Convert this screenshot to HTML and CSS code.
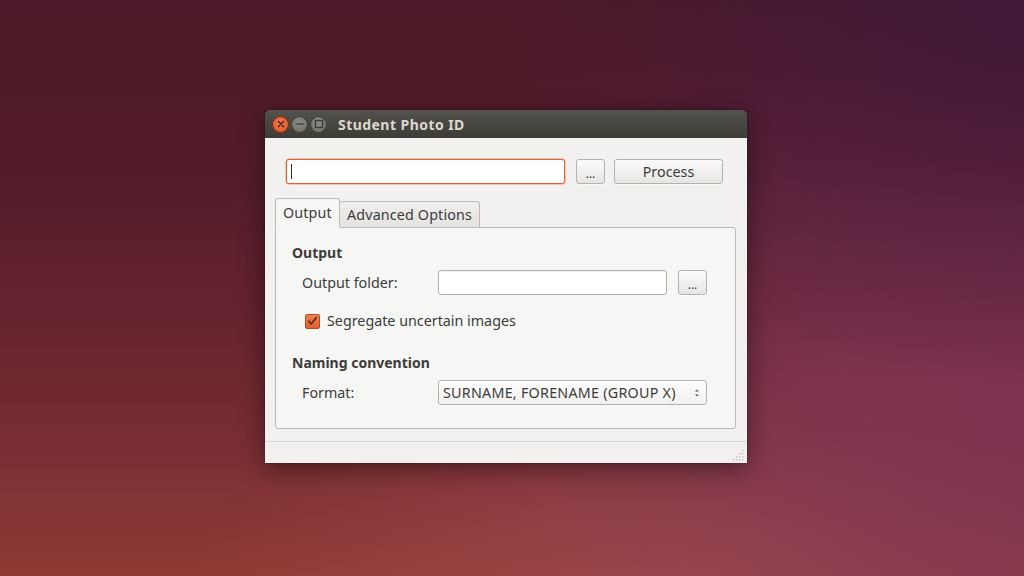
FILE: index.html
```html
<!DOCTYPE html>
<html>
<head>
<meta charset="utf-8">
<link rel="stylesheet" href="styles.css">
</head>
<body>
<div class="desktop">
  <div class="window">
    <div class="titlebar">
      <div class="wbtns">
        <span class="wbtn close"><svg width="16" height="16" viewBox="0 0 16 16"><path d="M5.5 5.5l5 5M10.5 5.5l-5 5" stroke="#3a1a10" stroke-width="1.4" stroke-linecap="round"/></svg></span>
        <span class="wbtn"><svg width="16" height="16" viewBox="0 0 16 16"><path d="M4.5 8h7" stroke="#3c3b37" stroke-width="1.4"/></svg></span>
        <span class="wbtn"><svg width="16" height="16" viewBox="0 0 16 16"><rect x="4.5" y="4.5" width="7" height="7" fill="none" stroke="#3c3b37" stroke-width="1.3"/></svg></span>
      </div>
      <div class="title">Student Photo ID</div>
    </div>
    <div class="content">
      <div class="toprow">
        <div class="entry focus"><span class="caret"></span></div>
        <button class="btn dots">...</button>
        <button class="btn process">Process</button>
      </div>
      <div class="notebook">
        <div class="tabs">
          <div class="tab active">Output</div>
          <div class="tab">Advanced Options</div>
        </div>
        <div class="pane">
          <div class="heading">Output</div>
          <div class="row">
            <span class="label">Output folder:</span>
            <div class="entry wide"></div>
            <button class="btn dots">...</button>
          </div>
          <div class="checkrow">
            <span class="check"><svg width="14" height="14" viewBox="0 0 14 14"><path d="M3 7.2l2.6 3L11 3.2" fill="none" stroke="#5a2210" stroke-width="1.7" stroke-linecap="round" stroke-linejoin="round"/></svg></span>
            <span class="label">Segregate uncertain images</span>
          </div>
          <div class="heading second">Naming convention</div>
          <div class="row">
            <span class="label">Format:</span>
            <div class="combo">
              <span class="combo-text">SURNAME, FORENAME (GROUP X)</span>
              <svg width="8" height="14" viewBox="0 0 8 14"><path d="M2 5.5L4 3.5L6 5.5Z M2 8.5L4 10.5L6 8.5Z" fill="#5a5a5a"/></svg>
            </div>
          </div>
        </div>
      </div>
    </div>
    <div class="statusbar">
      <svg class="grip" width="12" height="12" viewBox="0 0 12 12" fill="#c8c6c2">
        <rect x="9" y="1" width="1.5" height="1.5"/>
        <rect x="6" y="4" width="1.5" height="1.5"/><rect x="9" y="4" width="1.5" height="1.5"/>
        <rect x="3" y="7" width="1.5" height="1.5"/><rect x="6" y="7" width="1.5" height="1.5"/><rect x="9" y="7" width="1.5" height="1.5"/>
        <rect x="0" y="10" width="1.5" height="1.5"/><rect x="3" y="10" width="1.5" height="1.5"/><rect x="6" y="10" width="1.5" height="1.5"/><rect x="9" y="10" width="1.5" height="1.5"/>
      </svg>
    </div>
  </div>
</div>
</body>
</html>
```

FILE: styles.css
```css
* { box-sizing: border-box; }
html, body {
  margin: 0;
  padding: 0;
  width: 1024px;
  height: 576px;
  overflow: hidden;
}
body {
  font-family: "Noto Sans", "DejaVu Sans", sans-serif;
  font-size: 14.3px;
  color: #3c3c3c;
}
.desktop {
  width: 1024px;
  height: 576px;
  padding: 110px 0 0 265px;
  background:
    radial-gradient(ellipse 520px 380px at 1024px 0px, rgba(64,24,56,0.95), rgba(64,24,56,0) 100%),
    radial-gradient(ellipse 480px 420px at 1024px 430px, rgba(128,52,88,0.75), rgba(128,52,88,0) 100%),
    radial-gradient(ellipse 520px 260px at 720px 576px, rgba(165,80,88,0.6), rgba(165,80,88,0) 100%),
    radial-gradient(ellipse 460px 360px at 860px 330px, rgba(120,50,80,0.5), rgba(120,50,80,0) 100%),
    linear-gradient(180deg, #4c1a28 0%, #541c2a 30%, #65232e 55%, #7a2e33 78%, #8f3b35 100%);
}
.window {
  width: 482px;
  display: flex;
  flex-direction: column;
  box-shadow: 0 6px 26px rgba(0,0,0,0.45), 0 0 2px rgba(0,0,0,0.4);
  border-radius: 5px 5px 0 0;
}
.titlebar {
  height: 28px;
  background: linear-gradient(180deg, #55534d 0%, #4a4843 40%, #3d3c37 100%);
  border-radius: 5px 5px 0 0;
  display: flex;
  align-items: center;
  padding-left: 7px;
}
.wbtns { display: flex; gap: 2px; }
.wbtn {
  width: 17px;
  height: 17px;
  border-radius: 50%;
  background: radial-gradient(circle at 50% 40%, #8a8983, #6c6b66);
  box-shadow: inset 0 0 0 1px #3a3935;
  display: flex;
  align-items: center;
  justify-content: center;
}
.wbtn.close {
  background: radial-gradient(circle at 50% 40%, #f27a4e, #dc4e1f);
  box-shadow: inset 0 0 0 1px #6a2a14;
}
.title {
  margin-left: 11px;
  font-family: "Noto Sans", "DejaVu Sans", sans-serif;
  font-weight: bold;
  font-size: 14px;
  color: #dcd8cf;
  letter-spacing: 0.45px;
}
.content {
  background: #f2f1f0;
  padding: 21px 11px 12px 10px;
  display: flex;
  flex-direction: column;
}
.toprow {
  display: flex;
  align-items: center;
  padding-left: 11px;
  height: 25px;
}
.entry {
  height: 25px;
  background: #ffffff;
  border: 1px solid #b4b2ac;
  border-radius: 3px;
  box-shadow: inset 0 1px 1px rgba(0,0,0,0.05);
  display: flex;
  align-items: center;
}
.entry.focus {
  width: 279px;
  border-color: #e0622c;
  box-shadow: 0 0 0 0.5px #f0a07c;
}
.caret {
  display: block;
  width: 1px;
  height: 15px;
  background: #2a2a2a;
  margin-left: 4px;
}
.btn {
  height: 25px;
  border: 1px solid #b4b2ac;
  border-radius: 3px;
  background: linear-gradient(180deg, #fbfbfa 0%, #efeeec 60%, #e6e5e2 100%);
  font-family: "Noto Sans", "DejaVu Sans", sans-serif;
  font-size: 14.3px;
  color: #3c3c3c;
  padding: 0;
  box-shadow: 0 1px 0 rgba(255,255,255,0.6);
}
.btn.dots {
  width: 29px;
  font-size: 12px;
  padding-top: 3px;
  margin-left: 11px;
}
.btn.process {
  width: 109px;
  margin-left: 9px;
}
.notebook {
  margin-top: 14px;
  display: flex;
  flex-direction: column;
}
.tabs {
  display: flex;
  align-items: flex-end;
  height: 30px;
  position: relative;
  z-index: 1;
  margin-bottom: -1px;
}
.tab {
  height: 27px;
  padding: 0 7px;
  display: flex;
  align-items: center;
  border: 1px solid #bdbbb5;
  border-radius: 3px 3px 0 0;
  background: linear-gradient(180deg, #efeeec, #e4e3e0);
  color: #3c3c3c;
  border-left: none;
  letter-spacing: 0.15px;
}
.tab.active {
  height: 30px;
  background: #f6f6f5;
  border-left: 1px solid #bdbbb5;
  border-bottom-color: #f6f6f5;
  padding: 0 7px 2px 7px;
  width: 65px;
}
.pane {
  background: #f6f6f5;
  border: 1px solid #bdbbb5;
  border-radius: 0 3px 3px 3px;
  height: 202px;
  padding: 15px 28px 0 16px;
  display: flex;
  flex-direction: column;
}
.heading {
  font-weight: bold;
  font-size: 14px;
  height: 20px;
  line-height: 20px;
}
.heading.second { margin-top: 22px; }
.row {
  display: flex;
  align-items: center;
  height: 25px;
  padding-left: 10px;
  margin-top: 7px;
}
.label { line-height: 20px; }
.row .label { width: 136px; }
.entry.wide { width: 229px; }
.combo {
  width: 269px;
  height: 25px;
  border: 1px solid #b4b2ac;
  border-radius: 3px;
  background: linear-gradient(180deg, #fdfdfc 0%, #f2f1f0 100%);
  display: flex;
  align-items: center;
  justify-content: space-between;
  padding: 0 5px 0 4px;
}
.combo-text { letter-spacing: 0.25px; }
.checkrow {
  display: flex;
  align-items: center;
  height: 20px;
  margin-top: 16px;
  padding-left: 13px;
}
.check {
  width: 15px;
  height: 15px;
  border-radius: 2px;
  background: linear-gradient(180deg, #f08050, #de5f2c);
  border: 1px solid #b54a1e;
  display: flex;
  align-items: center;
  justify-content: center;
  margin-right: 7px;
}
.check svg { display: block; }
.statusbar {
  height: 22px;
  background: #f2f1f0;
  border-top: 1px solid #d9d7d3;
  display: flex;
  justify-content: flex-end;
  align-items: flex-end;
  padding: 0 2px 2px 0;
}
.grip { display: block; }
```
